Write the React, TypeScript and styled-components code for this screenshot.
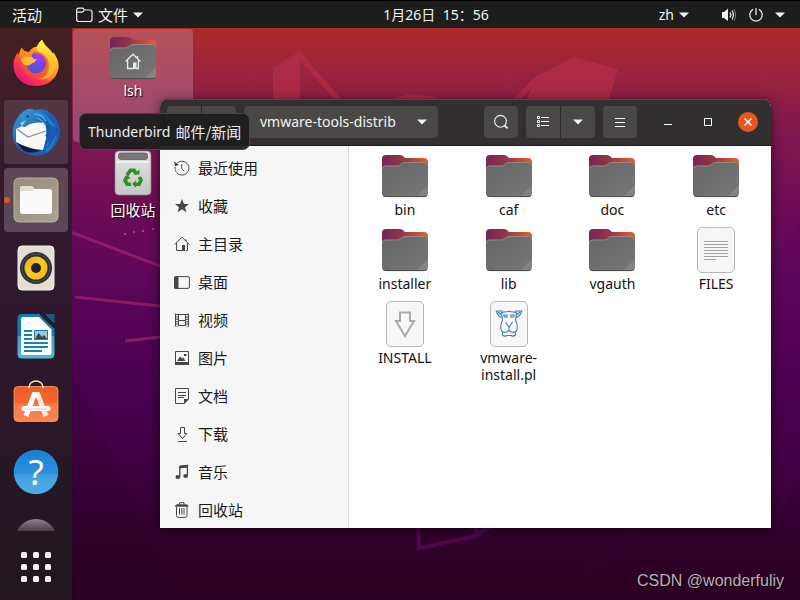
import React from 'react';
import styled, { createGlobalStyle, css } from 'styled-components';

const GlobalStyle = createGlobalStyle`
  * { box-sizing: border-box; }
  body { margin: 0; background: #2b0021; }
  body, button, input {
    font-family: "Noto Sans", "Noto Sans CJK SC", sans-serif;
    font-size: 14px;
  }
  button { border: 0; padding: 0; background: none; color: inherit; cursor: default; }
  svg { display: block; flex: none; }
`;

const Screen = styled.div`
  position: relative;
  display: grid;
  grid-template-rows: 28px minmax(0, 1fr);
  height: 100vh;
  overflow: hidden;
  background: linear-gradient(180deg, #ae2a28 4%, #9f2636 10%, #8b1c48 18%, #7c1551 25%, #6b0b57 36%, #5a0658 48%, #4c0150 62%, #3f0042 76%, #32002e 88%, #2a0020 100%);
`;

const WallpaperArt = styled.svg`
  position: absolute;
  inset: 0;
  width: 100%;
  height: 100%;
`;

/* ---------- top bar ---------- */

const TopBar = styled.header`
  position: relative;
  display: grid;
  grid-template-columns: 72px 1fr auto 1fr;
  align-items: center;
  background: #1d1d1d;
  border-top: 1px solid #000;
  color: #f2f2f2;
`;

const BarButton = styled.button<{ $gap?: number }>`
  display: flex;
  align-items: center;
  gap: ${p => p.$gap ?? 5}px;
  height: 27px;
  line-height: 20px;
`;

const CjkText = styled.span`
  font-family: "Noto Sans CJK SC", sans-serif;
  font-size: 15px;
  line-height: 20px;
`;

const Activities = styled(BarButton)`
  padding-left: 12px;
`;

const AppMenu = styled(BarButton)`
  padding-left: 4px;
`;

const Status = styled.div`
  display: flex;
  justify-content: flex-end;
  padding-right: 15px;
  gap: 32px;
`;

/* ---------- dock ---------- */

const Workspace = styled.div`
  position: relative;
  display: grid;
  grid-template-columns: 72px minmax(0, 1fr);
  min-height: 0;
`;

const Dock = styled.nav`
  display: flex;
  flex-direction: column;
  min-height: 0;
  background: linear-gradient(180deg, #432020 0%, #3b1c29 15%, #32192d 32%, #2c182a 58%, #261724 80%, #21171d 100%);
`;

const DockList = styled.div`
  flex: 1;
  min-height: 0;
  overflow: hidden;
  display: flex;
  flex-direction: column;
  gap: 4px;
  padding: 4px 4px 0;
`;

const DockItem = styled.button<{ $state?: 'hover' | 'active' }>`
  position: relative;
  flex: none;
  display: flex;
  align-items: center;
  justify-content: center;
  height: 64px;
  border-radius: 4px;
  ${p => p.$state === 'hover' && css`background: rgba(255, 255, 255, 0.12);`}
  ${p => p.$state === 'active' && css`background: rgba(255, 255, 255, 0.2);`}
`;

const RunningDot = styled.span`
  position: absolute;
  left: 0;
  top: 29px;
  width: 6px;
  height: 6px;
  border-radius: 50%;
  background: #e95420;
`;

const ShowApps = styled.button`
  display: flex;
  align-items: center;
  justify-content: center;
  height: 69px;
  padding-top: 2px;
`;

/* ---------- desktop ---------- */

const Desktop = styled.main`
  position: relative;
  min-width: 0;
`;

const DesktopIcons = styled.div`
  display: grid;
  gap: 2px;
  width: 120px;
  margin: 1px;
`;

const DesktopItem = styled.button<{ $selected?: boolean }>`
  display: flex;
  flex-direction: column;
  align-items: center;
  width: 100%;
  height: 113px;
  padding-top: 5px;
  border-radius: 4px;
  color: #fff;
  line-height: 17px;
  text-shadow: 1px 1px 1px #000;
  ${p => p.$selected && css`background: rgba(205, 165, 190, 0.32);`}
`;

const Tooltip = styled.div`
  position: absolute;
  left: 7px;
  top: 85px;
  height: 37px;
  padding: 0 8px;
  display: flex;
  align-items: center;
  gap: 5px;
  border: 1px solid #4a4346;
  border-radius: 7px;
  background: rgba(29, 29, 29, 0.95);
  color: #ededed;
  white-space: nowrap;
`;

const Watermark = styled.div`
  position: absolute;
  right: 16px;
  bottom: 9px;
  font: 16px/20px "Liberation Sans", sans-serif;
  color: #b9aeb9;
  text-shadow: 1px 1px 1px rgba(0, 0, 0, 0.7);
`;

/* ---------- file manager ---------- */

const Window = styled.section`
  position: absolute;
  left: 88px;
  right: 29px;
  top: 71px;
  bottom: 72px;
  display: flex;
  flex-direction: column;
  overflow: hidden;
  border-radius: 8px 8px 0 0;
  background: #fff;
  box-shadow: 0 2px 12px rgba(0, 0, 0, 0.55), 0 0 1px rgba(0, 0, 0, 0.8);
`;

const TitleBar = styled.div`
  flex: none;
  display: flex;
  align-items: center;
  gap: 8px;
  height: 47px;
  padding: 0 3px 2px 7px;
  background: #312f30;
  border-top: 1px solid #4c4a4b;
  border-bottom: 1px solid #1c1a1b;
`;

const ButtonGroup = styled.div`
  display: flex;
  gap: 1px;
  border-radius: 4px;
  background: #2a2829;
  overflow: hidden;
`;

const ToolButton = styled.button`
  display: flex;
  align-items: center;
  justify-content: center;
  width: 34px;
  height: 32px;
  border-radius: 4px;
  background: #4a4845;
  color: #f2f2f2;
  ${ButtonGroup} & { border-radius: 0; }
`;

const PathButton = styled(ToolButton)`
  justify-content: space-between;
  width: auto;
  min-width: 194px;
  padding: 0 11px 0 16px;
`;

const Spacer = styled.div`
  flex: 1;
`;

const WindowControls = styled.div`
  display: flex;
  margin-left: 3px;
`;

const WindowControl = styled.button`
  display: flex;
  align-items: center;
  justify-content: center;
  width: 40px;
  height: 32px;
`;

const WindowBody = styled.div`
  flex: 1;
  min-height: 0;
  display: grid;
  grid-template-columns: 189px minmax(0, 1fr);
`;

const Sidebar = styled.nav`
  min-height: 0;
  overflow: hidden;
  padding-top: 3px;
  background: #f6f6f6;
  border-right: 1px solid #d5d5d5;
`;

const Place = styled.button`
  display: flex;
  align-items: center;
  gap: 8px;
  width: 100%;
  height: 38px;
  padding-left: 14px;
  color: #1a1a1a;
  svg { color: #464646; }
`;

const FileGrid = styled.div`
  display: grid;
  grid-template-columns: repeat(4, minmax(0, 1fr));
  grid-auto-rows: min-content;
  row-gap: 8px;
  padding: 6px 3px 0 4px;
`;

const FileItem = styled.button`
  display: flex;
  flex-direction: column;
  align-items: center;
  gap: 1px;
  color: #111;
  line-height: 17px;
`;

const FileName = styled.span`
  max-width: 70px;
`;

/* ---------- small glyphs ---------- */

const Caret = () => (
  <svg width="10" height="6" viewBox="0 0 10 6"><path d="M0 0.5H10L5 5.5Z" fill="#f2f2f2" /></svg>
);

const TrayFolder = () => (
  <svg width="17" height="16" viewBox="0 0 17 16" fill="none" stroke="#f0f0f0" strokeWidth="1.2">
    <path d="M.7 12.5V3.2Q.7 1.2 2.7 1.2H6.3Q7.5 1.2 8 2.3Q8.4 3 9.5 3H14Q16 3 16 5V12.5Q16 14.5 14 14.5H2.7Q.7 14.5.7 12.5Z" />
    <path d="M.7 5.2H5.7Q7.2 5.2 8.2 3.2" />
  </svg>
);

const Volume = () => (
  <svg width="16" height="16" viewBox="0 0 16 16" fill="none" stroke="#f2f2f2">
    <path d="M1 5H3L7 1.5V14L3 11H1Z" fill="#f2f2f2" stroke="none" />
    <path d="M9 5.5Q10.8 8 9 10.5M11 3.5Q13.8 8 11 12.5" strokeWidth="1.2" />
    <path d="M13 2Q16.2 8 13 14" opacity=".45" />
  </svg>
);

const Power = () => (
  <svg width="14" height="14" viewBox="0 0 14 14" fill="none" stroke="#f2f2f2" strokeWidth="1.2">
    <path d="M4 1.4A6.2 6.2 0 1 0 10 1.4M7 0V7" />
  </svg>
);

const SearchGlyph = () => (
  <svg width="16" height="16" viewBox="0 0 16 16" fill="none" stroke="#f2f2f2">
    <circle cx="7.5" cy="7.3" r="5.9" strokeWidth="1.1" /><path d="M11.4 11.4L14.6 14.4" strokeWidth="1.8" />
  </svg>
);

const ListGlyph = () => (
  <svg width="14" height="12" viewBox="0 0 14 12" fill="none" stroke="#f2f2f2">
    <path d="M1.5.5H3.5V2.500H1.5ZM1.5 4.500H3.5V6.500H1.5ZM1.5 8.500H3.5V10.500H1.5Z" />
    <path d="M5 1.500H13M5 5.500H13M5 9.500H13" />
  </svg>
);

const MenuGlyph = () => (
  <svg width="10" height="10" viewBox="0 0 10 10" stroke="#f2f2f2"><path d="M0 1.5H10M0 5.5H10M0 9.5H10" /></svg>
);

const Chevron = ({ right }: { right?: boolean }) => (
  <svg width="16" height="16" viewBox="0 0 16 16" fill="none" stroke="#77746f" strokeWidth="1.2">
    <path d={right ? 'M6 3L11 8L6 13' : 'M10 3L5 8L10 13'} />
  </svg>
);

const placeGlyphs: Record<string, React.ReactNode> = {
  recent: <><path d="M3 3.4A6.9 6.9 0 1 1 1.2 7" /><path d="M0 1.6L1 6.2L5 5Z" fill="currentColor" stroke="none" /><path d="M7.7 4V8.5L10 11" /><path d="M1.2 9A6.9 6.9 0 0 0 6 14.7" stroke="#f6f6f6" strokeDasharray="1 2" /></>,
  star: <path d="M8 1L10 6H15L11 9.2L12.5 14.2L8 11.2L3.5 14.2L5 9.2L1 6H6Z" fill="currentColor" stroke="none" />,
  home: <><path d="M.7 8.5L8 1.2L15.3 8.5M12 5V3.3M2.6 7V14.5H8.5M13.5 7V14.5H12" /><path d="M8 9H11V15H8Z" fill="currentColor" stroke="none" /></>,
  desktop: <><rect x=".6" y="2.6" width="14.8" height="11.8" rx="1.5" /><path d="M.6 3H4V14.4H.6Z" fill="currentColor" /></>,
  video: <><path d="M1.5 1.5V14.5M14.5 1.5V14.5M4.5 2V14M11.5 2V14M4 2.5H12M4 8.500H12M4 13.500H12" /><path d="M3 2V14.5M13 2V14.5" strokeWidth="2" strokeDasharray="1 1.4" /></>,
  picture: <><path d="M1.5 1.5H14.5V14.5H1.5Z" /><path d="M1 12H15V15H1ZM3 11L6 6.5L8 8.5L9 7.2L11.5 11ZM10 4H12.5V6H10Z" fill="currentColor" stroke="none" /></>,
  document: <><path d="M1.500.500H14.500V11L10.500 15.500H1.500ZM4 4.5H12M4 7.5H12M4 9.5H10" /><path d="M10 15.5V11H15Z" fill="currentColor" stroke="none" /></>,
  download: <><path d="M6.5 1.5H10.5V7.5H12.8L8.5 12.6L4.2 7.5H6.5Z" /><path d="M4 15.500H13" /></>,
  music: <><path d="M5.8 12.5V2.5L13.4 1.5V11.5" strokeWidth="1.3" /><path d="M5.2 1.8L14 .7V3.500L5.2 4.600Z" fill="currentColor" stroke="none" /><ellipse cx="3.9" cy="13" rx="2.4" ry="1.9" fill="currentColor" stroke="none" /><ellipse cx="11.6" cy="12" rx="2.4" ry="1.9" fill="currentColor" stroke="none" /></>,
  trash: <><path d="M2.5 5V13.5Q2.5 15.4 4.5 15.4H11Q13 15.4 13 13.5V5M5.5 6V12.5M7.8 6V12.5M10 6V12.5M5.5 2.5V.7H10V2.5" /><path d="M1 4.8Q1 2.3 3.5 2.3H12Q14.5 2.3 14.5 4.8Z" fill="currentColor" stroke="none" /></>,
};

const PlaceGlyph = ({ kind }: { kind: string }) => (
  <svg width="16" height="16" viewBox="0 0 16 16" fill="none" stroke="currentColor">{placeGlyphs[kind]}</svg>
);

/* ---------- file type icons ---------- */

const FolderIcon = ({ home }: { home?: boolean }) => (
  <svg width="48" height="48" viewBox="0 0 48 48">
    <path d="M1 7Q1 3 5 3H19Q21.200 3 22.500 4.500L24 6H43Q47 6 47 10V20H1Z" fill="url(#folderBack)" />
    <path d="M1 17Q1 13.500 4.500 13.500H16.500Q18 13.500 19.200 12.300L21 10.800Q22 10 23.500 10H43.500Q47 10 47 13.500V41Q47 45 43 45H5Q1 45 1 41Z" fill="url(#folderFront)" />
    <path d="M1.500 17Q1.500 14 4.500 14H16.500Q18.200 14 19.500 12.800L21.200 11.300Q22 10.500 23.500 10.500H43.500Q46.500 10.500 46.500 13.500" fill="none" stroke="#929292" strokeWidth=".8" />
    <path d="M47 33V41Q47 45 43 45H35Z" fill="#fff" opacity=".1" />
    <path d="M2 43.300Q3 44.600 5 44.600H43Q45 44.600 46 43.300" fill="none" stroke="#4b4b4b" />
    {home && <g fill="none" stroke="#ebebeb" strokeWidth="1.300"><path d="M16.500 27.500L24 20.200L31.500 27.500M28.500 24V22M18.600 26.500V34.500H24M29.400 26.500V34.500H27" /><path d="M24 28.500H27.500V35H24Z" fill="#ebebeb" stroke="none" /></g>}
  </svg>
);

const Sheet = ({ children }: { children: React.ReactNode }) => (
  <svg width="48" height="48" viewBox="0 0 48 48">
    <rect x="5.500" y="1.500" width="37" height="45" rx="4.500" fill="#f7f7f7" stroke="#b9b9b9" />
    {children}
  </svg>
);

const TextSheet = () => (
  <Sheet><path d="M12 15.500H36M12 18.500H36M12 21.500H36M12 24.500H36M12 27.500H36M12 30.500H36M12 33.500H24" stroke="#a2a2a2" /></Sheet>
);

const InstallSheet = () => (
  <Sheet><path d="M19 12.500H29V21H33L24 36L15 21H19Z" fill="none" stroke="#aaa" strokeWidth="2" /></Sheet>
);

const PerlSheet = () => (
  <Sheet>
    <g fill="none" stroke="#3c80b8" strokeWidth="1.100">
      <path d="M16.500 13.500Q18 11.500 20.500 12L24 11.200L27.500 12Q30 11.500 31.500 13.500" />
      <path d="M16.500 13.500L17 11L11.300 11Q13 17 17 17.300M31.500 13.500L31 11L36.700 11Q35 17 31 17.300M13 12L16.500 15M35 12L31.500 15" />
      <path d="M16.500 13.500L17.500 20Q14.500 26 16.500 31Q18.500 33 21.500 32L23 31H25L26.500 32Q29.500 33 31.500 31Q33.500 26 30.500 20L31.500 13.500" />
      <path d="M18.500 15H22V17Q19.500 18 18.500 15M29.500 15H26V17Q28.500 18 29.500 15M20.500 22L24 27.500L27.500 22M24 27.500V31" />
      <path d="M17.500 32V35Q20 37 22 35.500H26Q28 37 30.500 35V32" />
    </g>
  </Sheet>
);

const TrashCan = () => (
  <svg width="48" height="51" viewBox="0 0 48 51">
    <rect x="6" y="2" width="36" height="44" rx="4" fill="url(#can)" stroke="#888" strokeWidth=".7" />
    <rect x="9.500" y="4" width="29" height="6.500" rx="2.500" fill="#777" stroke="#555" strokeWidth=".7" />
    <path d="M7 13H41" stroke="#f5f5f5" strokeWidth="1.500" />
    <g fill="none" stroke="#2a9121" strokeWidth="3.600">
      <path d="M18 26L21.500 21.300H25L27.500 25" />
      <path d="M30.500 28L32 31.500L30 35.200H26" />
      <path d="M22 35.200H18.200L16 31.500L18 28" />
    </g>
    <path d="M24.500 25.500H30.500V20.500ZM27 31.500V38.500L23 35ZM15 29L18.500 25.300L21.500 30Z" fill="#2a9121" />
  </svg>
);

/* ---------- dock icons ---------- */

const Big = ({ children }: { children: React.ReactNode }) => (
  <svg width="48" height="48" viewBox="0 0 48 48">{children}</svg>
);

const Firefox = () => (
  <Big>
    <g transform="translate(0 -1)">
      <path d="M9.500 8.500Q12 13 17 13Q20 8 25 7.500Q26 4 30 .8Q32 6 37.500 10.500Q40 13 41 15L41.500 13.500Q48 23 46.300 30Q43 45 26 47Q9 47.500 3 34Q-1 23 5.500 13.500L6 16Q8 12 9.500 8.500Z" fill="url(#foxBody)" />
      <path d="M25 7.500Q26 4 30 .8Q32 6 37.500 10.500Q40 13 41 15L41.500 13.500Q48 24 45.500 32Q42 41 34 42Q40 37 39 28Q37 18 29 14Q24 11 25 7.500Z" fill="url(#foxFlame)" />
      <path d="M21 12.500Q30 12 36 20Q38 31 32 37Q24 42 16 37Q8 30 13 20Z" fill="#f9562e" opacity=".75" />
      <circle cx="24" cy="24.500" r="10" fill="url(#foxGlobe)" />
      <path d="M8.500 20Q14 16.500 20 18Q22 21 25 20.500Q23 23.500 19 25Q17 27 14 26.500Q9 24 8.500 20Z" fill="url(#foxEar)" />
      <path d="M9.500 8.500Q12 13 17 13Q20 11 23 11Q19.500 14 20 18Q13 17 8.500 20Q7 18 8 13Z" fill="#ff8b20" />
      <path d="M33 17Q39 23 37 31Q34 39 26 40Q37 42 41 34Q44 25 38 18Q35 14 29 13Z" fill="#ffc52a" opacity=".75" />
    </g>
  </Big>
);

const Thunderbird = () => (
  <Big>
    <path d="M12 3Q17-1 23 2Q34-1 42 8Q51 20 46 32Q41 44 30 47Q15 50 5 39Q-2 29 2 17Q5 8 12 3Z" fill="url(#birdBody)" />
    <path d="M4 34L12 43Q20 46 27 43L32 38Z" fill="#1d143f" />
    <path d="M10 18Q23 13 33 15Q35 21 34 31L31 42Q16 41 4 34L4 21Z" fill="#f8f8f8" />
    <path d="M5 21L16 29L34 23" fill="none" stroke="#8d8d95" strokeWidth="1.200" />
    <path d="M11 4Q18-1 25 5Q29 10 24 14Q18 15 13 19Q9 19 8 15Q8 9 11 4Z" fill="url(#birdHead)" />
    <path d="M21 5Q34 6 38 17Q41 26 35 37L34 45Q46 35 44 22Q40 8 26 3Z" fill="#218bd2" opacity=".75" />
    <path d="M33 15L46 20Q44 31 35 41L37 34L33 35L36 29L33 28L36 23Z" fill="#1754ae" opacity=".8" />
    <path d="M22 6Q30 6 34 13M25 10Q31 12 33 17" stroke="#4cb5ed" strokeWidth="1.300" fill="none" />
    <path d="M8 15L14 12.500L10 18Z" fill="#b7c9d7" /><circle cx="15.500" cy="8.500" r="1" fill="#0c264e" />
  </Big>
);

const FilesApp = () => (
  <Big>
    <rect x="2" y="2" width="44" height="44" rx="5" fill="url(#filesTile)" stroke="#c9c3ae" strokeWidth=".8" />
    <path d="M8 12Q8 10 10 10H20L23 13H38V18H8Z" fill="#e3dfd3" />
    <path d="M8 17Q8 15 10 15H20Q22 15 23 13H37.500Q40 13 40 15.500V35.500Q40 38 37.500 38H10.500Q8 38 8 35.500Z" fill="#fafafa" />
  </Big>
);

const MusicApp = () => (
  <Big>
    <rect x="6" y="2" width="36" height="44" rx="4" fill="#e3dfd2" stroke="#f4f1e9" />
    <circle cx="24" cy="24" r="16" fill="#2c2d38" /><circle cx="24" cy="24" r="14" fill="none" stroke="#50515e" />
    <circle cx="24" cy="24" r="11.500" fill="url(#cone)" /><circle cx="24" cy="24" r="5" fill="#22232a" />
  </Big>
);

const WriterApp = () => (
  <Big>
    <path d="M10 2H28L42.500 16V42Q42.500 46.500 38 46.500H10Q5.500 46.500 5.500 42V6.500Q5.500 2 10 2Z" fill="url(#writer)" />
    <path d="M33 2H41Q42.500 2 42.500 3.500V11.500Z" fill="#0c6390" /><path d="M28 2L42.500 16" stroke="#16202c" strokeWidth="1.500" />
    <path d="M11 5H27L39.500 17.500V41Q39.500 43 37.500 43H11Q9 43 9 41V7Q9 5 11 5Z" fill="#fff" />
    <path d="M12 19H20M12 23H20M12 27H20M12 31H36M12 35H36M12 39H30" stroke="#1682b5" strokeWidth="2" />
    <rect x="22.500" y="18.500" width="13" height="9" fill="#8bcdec" stroke="#1682b5" />
    <path d="M23 27L26.500 21L30 25L32 23L35 27Z" fill="#444" /><path d="M31 19H35V22Z" fill="#f3bd22" />
  </Big>
);

const SoftwareApp = () => (
  <Big>
    <rect x="2" y="6.500" width="44" height="35" rx="4" fill="url(#bag)" stroke="#f9a070" strokeWidth=".8" />
    <path d="M17 8V7A7 6 0 0 1 31 7V8" fill="none" stroke="#fae0b2" strokeWidth="1.600" />
    <path d="M22.800 13L14 36" stroke="#fff" strokeWidth="5" /><path d="M25.200 13L34 36" stroke="#ffe9de" strokeWidth="5" />
    <path d="M12 28.500H36" stroke="#fff" strokeWidth="5" strokeLinecap="round" /><path d="M13 29H35" stroke="#f1cfc0" />
    <path d="M21 12H27L24 18Z" fill="#fff" />
  </Big>
);

const HelpApp = () => (
  <Big>
    <circle cx="24" cy="24" r="22.300" fill="url(#help)" />
    <text x="24" y="37" textAnchor="middle" fontFamily="Noto Sans" fontSize="35" fill="#fff">?</text>
  </Big>
);

const HiddenApp = () => (
  <Big><circle cx="24" cy="24" r="21" fill="url(#dome)" /></Big>
);

const AppsGrid = () => (
  <svg width="30" height="30" viewBox="0 0 30 30" fill="#f2f2f2">
    {[0, 12, 24].map(y => [0, 12, 24].map(x => <rect key={`${x}-${y}`} x={x} y={y} width="6" height="6" rx="1.500" />))}
  </svg>
);

const Wallpaper = () => (
  <WallpaperArt viewBox="0 0 800 600" preserveAspectRatio="xMidYMid slice" aria-hidden="true">
    <defs>
      <linearGradient id="folderBack"><stop offset="0" stopColor="#762558" /><stop offset=".45" stopColor="#963547" /><stop offset="1" stopColor="#f05e25" /></linearGradient>
      <linearGradient id="folderFront" x2="1" y2="1"><stop stopColor="#666" /><stop offset="1" stopColor="#777" /></linearGradient>
      <linearGradient id="can" x2="0" y2="1"><stop stopColor="#e4e4e4" /><stop offset="1" stopColor="#c6c6c6" /></linearGradient>
      <linearGradient id="foxBody" x1=".8" y1=".1" x2=".2" y2=".9"><stop stopColor="#ffd83a" /><stop offset=".35" stopColor="#ff9d25" /><stop offset=".65" stopColor="#ff4a3b" /><stop offset="1" stopColor="#ef1378" /></linearGradient>
      <linearGradient id="foxFlame" x2="0" y2="1"><stop stopColor="#fff44d" /><stop offset=".5" stopColor="#ffc52a" /><stop offset="1" stopColor="#ff8426" stopOpacity=".5" /></linearGradient>
      <linearGradient id="foxEar" x2="1"><stop stopColor="#ffae24" /><stop offset="1" stopColor="#ffc93a" /></linearGradient>
      <radialGradient id="foxGlobe" cx=".65" cy=".25"><stop stopColor="#a63df5" /><stop offset="1" stopColor="#5c4fd8" /></radialGradient>
      <linearGradient id="birdBody" x2="1" y2="1"><stop stopColor="#2aa7e4" /><stop offset=".5" stopColor="#185cb5" /><stop offset="1" stopColor="#1e62b5" /></linearGradient>
      <linearGradient id="birdHead" x2="1" y2="1"><stop stopColor="#3c9dda" /><stop offset="1" stopColor="#1d67b5" /></linearGradient>
      <linearGradient id="filesTile" x2="1" y2="1"><stop stopColor="#958d79" /><stop offset="1" stopColor="#aaa28e" /></linearGradient>
      <linearGradient id="cone" x2="1" y2="1"><stop stopColor="#eab012" /><stop offset=".5" stopColor="#ffc91d" /><stop offset="1" stopColor="#f4b60f" /></linearGradient>
      <linearGradient id="writer" x2="0" y2="1"><stop offset=".5" stopColor="#147dac" /><stop offset=".5" stopColor="#3a9eca" /><stop offset="1" stopColor="#55b5dd" /></linearGradient>
      <linearGradient id="bag" x2="0" y2="1"><stop stopColor="#f15b24" /><stop offset=".5" stopColor="#f56a31" /><stop offset=".5" stopColor="#f77c49" /><stop offset="1" stopColor="#f78552" /></linearGradient>
      <linearGradient id="help" x2="0" y2="1"><stop stopColor="#1b7fd4" /><stop offset=".54" stopColor="#2890dc" /><stop offset=".54" stopColor="#42a0e2" /><stop offset="1" stopColor="#4cade9" /></linearGradient>
      <linearGradient id="dome" x2="0" y2="1"><stop stopColor="#8b828b" /><stop offset=".3" stopColor="#4a3b49" /></linearGradient>
    </defs>
    <g fill="#b92e4a" opacity=".65">
      <path d="M273 68L300 51L341 99V150H334V99L300 60V150H273Z" />
      <path d="M513 99L535 77L574 57L618 69L609 99V120H527V99L532 87L520 99Z" />
      <path d="M392 99L408 94L437 97V110H392Z" />
    </g>
    <g fill="none" stroke="#a92a72" strokeWidth="3" opacity=".6">
      <path d="M47 223L160 266L220 290M75 297L160 306L220 312M125 341L160 337L220 330" />
    </g>
    <path d="M417 510L419 548L476 536L500 520M476 536L478 520" fill="none" stroke="#5e0860" strokeWidth="4" opacity=".7" />
    <path d="M72 370L180 600H72Z" fill="#200018" opacity=".12" />
    <path d="M800 220L771 270V528L800 480Z" fill="#5e0060" opacity=".15" />
    <path d="M555 600L650 528H625Z" fill="#5e0060" opacity=".06" />
    <g fill="#ba75b0" opacity=".7"><circle cx="125" cy="234" r="1" /><circle cx="134" cy="232" r="1" /><circle cx="143" cy="231" r="1" /><circle cx="153" cy="229" r="1" /></g>
  </WallpaperArt>
);

const dockApps: { name: string; icon: React.ReactNode; state?: 'hover' | 'active' }[] = [
  { name: 'Firefox', icon: <Firefox /> },
  { name: 'Thunderbird', icon: <Thunderbird />, state: 'hover' },
  { name: 'Files', icon: <FilesApp />, state: 'active' },
  { name: 'Rhythmbox', icon: <MusicApp /> },
  { name: 'LibreOffice Writer', icon: <WriterApp /> },
  { name: 'Software', icon: <SoftwareApp /> },
  { name: 'Help', icon: <HelpApp /> },
  { name: 'More', icon: <HiddenApp /> },
];

const places = [
  ['recent', '最近使用'], ['star', '收藏'], ['home', '主目录'], ['desktop', '桌面'], ['video', '视频'],
  ['picture', '图片'], ['document', '文档'], ['download', '下载'], ['music', '音乐'], ['trash', '回收站'],
];

const files: [string, React.ReactNode][] = [
  ['bin', <FolderIcon />], ['caf', <FolderIcon />], ['doc', <FolderIcon />], ['etc', <FolderIcon />],
  ['installer', <FolderIcon />], ['lib', <FolderIcon />], ['vgauth', <FolderIcon />], ['FILES', <TextSheet />],
  ['INSTALL', <InstallSheet />], ['vmware-install.pl', <PerlSheet />],
];

export default function App() {
  return (
    <>
      <GlobalStyle />
      <Screen>
        <Wallpaper />
        <TopBar>
          <Activities><CjkText>活动</CjkText></Activities>
          <AppMenu><TrayFolder /><CjkText>文件</CjkText><Caret /></AppMenu>
          <BarButton>1月26日&nbsp; 15：56</BarButton>
          <Status>
            <BarButton>zh<Caret /></BarButton>
            <BarButton $gap={12} aria-label="System menu"><Volume /><Power /><Caret /></BarButton>
          </Status>
        </TopBar>
        <Workspace>
          <Dock>
            <DockList>
              {dockApps.map(app => (
                <DockItem key={app.name} $state={app.state} aria-label={app.name}>
                  {app.icon}
                  {app.state === 'active' && <RunningDot />}
                </DockItem>
              ))}
            </DockList>
            <ShowApps aria-label="Show applications"><AppsGrid /></ShowApps>
          </Dock>
          <Desktop>
            <DesktopIcons>
              <DesktopItem $selected><FolderIcon home />lsh</DesktopItem>
              <DesktopItem><TrashCan /><CjkText>回收站</CjkText></DesktopItem>
            </DesktopIcons>
            <Window>
              <TitleBar>
                <ButtonGroup>
                  <ToolButton aria-label="Back"><Chevron /></ToolButton>
                  <ToolButton aria-label="Forward"><Chevron right /></ToolButton>
                </ButtonGroup>
                <PathButton>vmware-tools-distrib<Caret /></PathButton>
                <Spacer />
                <ToolButton aria-label="Search"><SearchGlyph /></ToolButton>
                <ButtonGroup>
                  <ToolButton aria-label="List view"><ListGlyph /></ToolButton>
                  <ToolButton aria-label="View options"><Caret /></ToolButton>
                </ButtonGroup>
                <ToolButton aria-label="Menu"><MenuGlyph /></ToolButton>
                <WindowControls>
                  <WindowControl aria-label="Minimize"><svg width="8" height="8" viewBox="0 0 8 8"><path d="M0 6.500H8" stroke="#fff" /></svg></WindowControl>
                  <WindowControl aria-label="Maximize"><svg width="8" height="8" viewBox="0 0 8 8"><path d="M.5.5H7.500V7.500H.5Z" fill="none" stroke="#fff" /></svg></WindowControl>
                  <WindowControl aria-label="Close"><svg width="20" height="20" viewBox="0 0 20 20"><circle cx="10" cy="10" r="10" fill="#e95420" /><path d="M6.500 6.500L13.500 13.500M13.500 6.500L6.500 13.500" stroke="#fff" strokeWidth="1.500" /></svg></WindowControl>
                </WindowControls>
              </TitleBar>
              <WindowBody>
                <Sidebar>
                  {places.map(([kind, label]) => (
                    <Place key={kind}><PlaceGlyph kind={kind} /><CjkText>{label}</CjkText></Place>
                  ))}
                </Sidebar>
                <FileGrid>
                  {files.map(([name, icon]) => (
                    <FileItem key={name}>{icon}<FileName>{name}</FileName></FileItem>
                  ))}
                </FileGrid>
              </WindowBody>
            </Window>
            <Tooltip role="tooltip">Thunderbird <CjkText>邮件/新闻</CjkText></Tooltip>
            <Watermark>CSDN @wonderfuliy</Watermark>
          </Desktop>
        </Workspace>
      </Screen>
    </>
  );
}
